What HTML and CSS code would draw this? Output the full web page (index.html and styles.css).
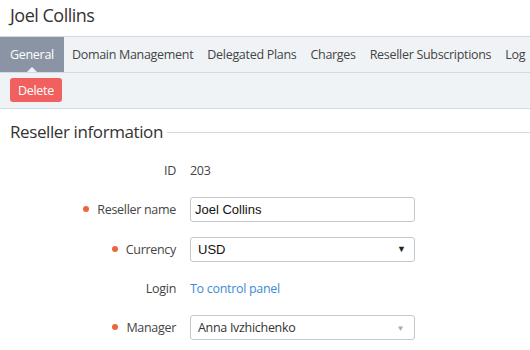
FILE: index.html
```html
<!DOCTYPE html>
<html lang="en">
<head>
    <meta charset="UTF-8">
    <title>Joel Collins</title>
    <link rel="stylesheet" href="styles.css">
</head>
<body>

<h1 class="page-title">Joel Collins</h1>

<!-- Tabs -->
<div class="tabs">
    <a class="tab active-tab">General</a>
    <a class="tab">Domain Management</a>
    <a class="tab">Delegated Plans</a>
    <a class="tab">Charges</a>
    <a class="tab">Reseller Subscriptions</a>
    <a class="tab">Log</a>
</div>

<!-- Toolbar -->
<div class="toolbar">
    <button class="btn-delete">Delete</button>
</div>

<div class="section">
    <div class="section-title">
        <span>Reseller information</span>
        <span class="section-line"></span>
    </div>

    <div class="form">
        <div class="row">
            <div class="label">ID</div>
            <div class="value">203</div>
        </div>
        <div class="row">
            <div class="label required">Reseller name</div>
            <div class="value"><input class="field" type="text" value="Joel Collins"></div>
        </div>
        <div class="row">
            <div class="label required">Currency</div>
            <div class="value">
                <div class="field select-native">USD<span class="arrow-dark">&#9660;</span></div>
            </div>
        </div>
        <div class="row">
            <div class="label">Login</div>
            <div class="value"><a class="link">To control panel</a></div>
        </div>
        <div class="row">
            <div class="label required">Manager</div>
            <div class="value">
                <div class="field select-custom">Anna Ivzhichenko<span class="arrow-light">&#9660;</span></div>
            </div>
        </div>
    </div>
</div>

</body>
</html>
```

FILE: styles.css
```css
* {
    margin: 0;
    padding: 0;
    box-sizing: border-box;
}

body {
    font-family: 'Open Sans', sans-serif;
    font-size: 12.5px;
    letter-spacing: -0.3px;
    color: #333;
    background: #fff;
}

.page-title {
    font-size: 18px;
    font-weight: normal;
    letter-spacing: -0.5px;
    color: #333;
    padding: 0 10px;
    height: 36px;
    line-height: 30px;
}

/* Tabs */
.tabs {
    display: flex;
    background: #f0f3f6;
    border-top: 1px solid #d3d9e0;
    border-bottom: 1px solid #d3d9e0;
    height: 37px;
    white-space: nowrap;
    overflow: hidden;
}

.tab {
    position: relative;
    padding: 0 7px;
    line-height: 35px;
    color: #444;
}

.active-tab {
    background: #8a94a4;
    color: #fff;
    padding: 0 10px;
    margin-right: 1px;
}

.active-tab::after {
    content: "";
    position: absolute;
    left: 50%;
    bottom: 0;
    margin-left: -5px;
    border-left: 5px solid transparent;
    border-right: 5px solid transparent;
    border-bottom: 5px solid #f0f3f6;
}

/* Toolbar */
.toolbar {
    background: #f0f3f6;
    border-bottom: 1px solid #d3d9e0;
    height: 36px;
    padding: 5px 10px;
}

.btn-delete {
    background: #f25f5f;
    color: #fff;
    border: none;
    border-radius: 3px;
    font-family: 'Open Sans', sans-serif;
    font-size: 12.5px;
    letter-spacing: -0.3px;
    height: 24px;
    padding: 0 8px;
}

/* Section */
.section {
    padding: 10px 0 0 10px;
}

.section-title {
    display: flex;
    align-items: center;
    font-size: 17px;
    letter-spacing: -0.4px;
    color: #333;
    height: 24px;
}

.section-line {
    flex: 1;
    height: 1px;
    background: #d5d9de;
    margin-left: 4px;
    margin-top: 2px;
}

.form {
    padding-top: 8px;
}

.row {
    display: flex;
    align-items: center;
    height: 39.25px;
}

.label {
    width: 166px;
    text-align: right;
    color: #444;
}

.required::before {
    content: "";
    display: inline-block;
    width: 6px;
    height: 6px;
    border-radius: 50%;
    background: #f0643c;
    margin-right: 8px;
    vertical-align: 2px;
}

.value {
    padding-left: 14px;
    color: #444;
}

.field {
    display: flex;
    align-items: center;
    width: 225px;
    height: 25px;
    border: 1px solid #c4c8cc;
    border-radius: 3px;
    padding: 0 8px 0 7px;
    background: #fff;
}

input.field {
    font-family: 'Liberation Sans', Arial, sans-serif;
    font-size: 13px;
    letter-spacing: 0;
    color: #111;
    padding-left: 4px;
    outline: none;
}

.select-native {
    font-family: 'Liberation Sans', Arial, sans-serif;
    font-size: 13px;
    letter-spacing: 0;
    color: #111;
    justify-content: space-between;
}

.arrow-dark {
    font-size: 9px;
    color: #222;
}

.select-custom {
    color: #333;
    justify-content: space-between;
    padding: 0 10px 0 7px;
}

.arrow-light {
    font-size: 8px;
    color: #aaa;
}

.link {
    color: #3c8dd6;
    text-decoration: none;
}
```
